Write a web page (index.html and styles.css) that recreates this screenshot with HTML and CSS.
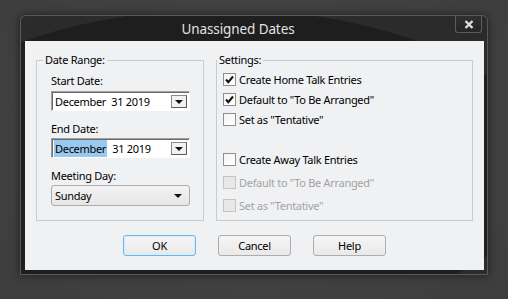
FILE: index.html
```html
<!DOCTYPE html>
<html lang="en">
<head>
    <meta charset="UTF-8">
    <title>Unassigned Dates</title>
    <link rel="stylesheet" href="styles.css">
</head>
<body>

    <div class="window">
        <div class="titlebar">
            <div class="title">Unassigned Dates</div>
            <button class="close-btn" aria-label="Close">
                <svg width="10" height="9" viewBox="0 0 10 9">
                    <path d="M1.5 1 L8.5 8 M8.5 1 L1.5 8" stroke="#dcdcdc" stroke-width="2.4" fill="none"/>
                </svg>
            </button>
        </div>

        <div class="client">
            <div class="groups">
                <fieldset class="group date-range">
                    <legend>Date Range:</legend>

                    <div class="field-label first">Start Date:</div>
                    <div class="date-picker">
                        <span class="date-text"><span>December</span>  31 2019</span>
                        <span class="drop-btn"></span>
                    </div>

                    <div class="field-label">End Date:</div>
                    <div class="date-picker">
                        <span class="date-text"><span class="selected">December</span>  31 2019</span>
                        <span class="drop-btn"></span>
                    </div>

                    <div class="field-label">Meeting Day:</div>
                    <div class="combo">
                        <span>Sunday</span>
                        <span class="combo-arrow"></span>
                    </div>
                </fieldset>

                <fieldset class="group settings">
                    <legend>Settings:</legend>

                    <div class="check-list home">
                        <label class="check-row">
                            <span class="box checked"><svg width="11" height="11" viewBox="0 0 11 11"><path d="M2 5.5 L4.3 8.2 L9 2.5" stroke="#111" stroke-width="2" fill="none"/></svg></span>
                            Create Home Talk Entries
                        </label>
                        <label class="check-row">
                            <span class="box checked"><svg width="11" height="11" viewBox="0 0 11 11"><path d="M2 5.5 L4.3 8.2 L9 2.5" stroke="#111" stroke-width="2" fill="none"/></svg></span>
                            Default to "To Be Arranged"
                        </label>
                        <label class="check-row">
                            <span class="box"></span>
                            Set as "Tentative"
                        </label>
                    </div>

                    <div class="check-list away">
                        <label class="check-row">
                            <span class="box"></span>
                            Create Away Talk Entries
                        </label>
                        <label class="check-row disabled">
                            <span class="box"></span>
                            Default to "To Be Arranged"
                        </label>
                        <label class="check-row disabled">
                            <span class="box"></span>
                            Set as "Tentative"
                        </label>
                    </div>
                </fieldset>
            </div>

            <div class="buttons">
                <button class="btn default">OK</button>
                <button class="btn">Cancel</button>
                <button class="btn">Help</button>
            </div>
        </div>
    </div>

</body>
</html>
```

FILE: styles.css
```css
* {
    margin: 0;
    padding: 0;
    box-sizing: border-box;
}

body {
    font-family: 'Noto Sans', 'Open Sans', sans-serif;
    font-size: 11px;
    letter-spacing: -0.3px;
    background: radial-gradient(ellipse at 50% 45%, #474747, #3d3d3d);
    width: 508px;
    height: 299px;
    overflow: hidden;
    padding: 15px 0 0 20px;
}

.window {
    width: 468px;
    height: 260px;
    border: 1px solid #585858;
    border-radius: 6px 6px 0 0;
    background: radial-gradient(ellipse 326px 157px at 200px 150px, #1e1e1e 99.5%, #2b2b2b 100%);
    box-shadow: 0 0 10px rgba(0, 0, 0, 0.55);
    padding: 0 3px 4px 4px;
    display: flex;
    flex-direction: column;
}

.titlebar {
    height: 25px;
    display: flex;
    align-items: flex-start;
}

.title {
    flex: 1;
    text-align: center;
    color: #e2e2e2;
    font-size: 13.5px;
    letter-spacing: -0.1px;
    line-height: 27px;
    padding-right: 4px;
}

.close-btn {
    width: 27px;
    height: 17px;
    margin-right: 2px;
    border: 1px solid #5c5c5c;
    border-top: none;
    border-radius: 0 0 3px 3px;
    background: linear-gradient(#2f2f2f, #262626);
    display: flex;
    align-items: center;
    justify-content: center;
}

.client {
    flex: 1;
    background-color: #f0f1f3;
    padding: 11px 11px 0 11px;
    color: #000;
}

.groups {
    display: flex;
    gap: 12px;
}

.group {
    border: 1px solid #c9cbcd;
    height: 169px;
    min-width: 0;
}

.group legend {
    line-height: 16px;
    padding: 0 2px;
}

.date-range {
    width: 168px;
    padding: 0 13px 0 14px;
}

.date-range legend {
    margin-left: -8px;
}

.settings {
    width: 257px;
    padding: 0 6px;
}

.settings legend {
    margin-left: -6px;
}

.field-label {
    line-height: 16px;
    margin-top: 10px;
    margin-bottom: 1px;
}

.field-label.first {
    margin-top: 5px;
    margin-bottom: 2px;
}

.date-picker {
    height: 20px;
    background-color: #fff;
    border-top: 1px solid #a0a0a0;
    border-left: 1px solid #a0a0a0;
    border-right: 1px solid #fff;
    border-bottom: 1px solid #fff;
    box-shadow: inset 1px 1px 0 #6a6a6a;
    display: flex;
    align-items: center;
    padding: 0 2px 0 3px;
}

.date-text {
    flex: 1;
    white-space: pre;
    line-height: 15px;
    padding-top: 1px;
}

.date-text .selected {
    background-color: #99c9ef;
    padding: 1px;
    margin-left: -1px;
}

.drop-btn {
    width: 16px;
    height: 13px;
    border: 1px solid #8a8a8a;
    border-right-color: #5a5a5a;
    border-bottom-color: #5a5a5a;
    background-color: #f2f2f2;
    position: relative;
}

.drop-btn::after,
.combo-arrow {
    content: "";
    width: 0;
    height: 0;
    border-left: 4px solid transparent;
    border-right: 4px solid transparent;
    border-top: 4px solid #111;
}

.drop-btn::after {
    position: absolute;
    left: 3px;
    top: 4px;
}

.field-label + .combo {
    margin-top: 1px;
}

.combo {
    height: 21px;
    border: 1px solid #acacac;
    border-radius: 3px;
    background: linear-gradient(#f3f3f3, #e6e6e6);
    display: flex;
    align-items: center;
    justify-content: space-between;
    padding: 0 7px 0 3px;
    line-height: 15px;
}

.check-list {
    display: flex;
    flex-direction: column;
}

.home {
    margin-top: 1px;
}

.away {
    margin-top: 20px;
    gap: 3px;
}

.check-row {
    height: 20px;
    display: flex;
    align-items: center;
    gap: 3px;
    white-space: nowrap;
}

.box {
    width: 13px;
    height: 13px;
    border: 1px solid #8f8f8f;
    background: linear-gradient(135deg, #f4f4f4, #fff);
    display: flex;
    align-items: center;
    justify-content: center;
    flex-shrink: 0;
}

.disabled {
    color: #a3a3a3;
}

.disabled .box {
    border-color: #c4c4c4;
    background: #e8e8e8;
}

.buttons {
    display: flex;
    justify-content: center;
    gap: 22px;
    margin-top: 14px;
}

.btn {
    width: 73px;
    height: 21px;
    font-family: inherit;
    font-size: 11px;
    letter-spacing: inherit;
    color: #000;
    border: 1px solid #adadad;
    border-radius: 3px;
    background: linear-gradient(#f5f5f5, #e9e9e9);
}

.btn.default {
    border-color: #6cb7ec;
    box-shadow: inset 0 0 0 1px #d6ecfa;
}
```
